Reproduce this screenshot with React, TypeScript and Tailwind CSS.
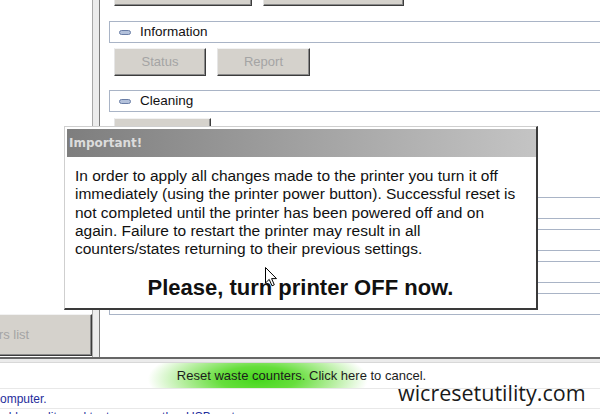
const ui = { fontFamily: '"Liberation Sans", Arial, sans-serif' }

function WinButton({ label, className = '' }: { label?: string; className?: string }) {
  return (
    <div
      className={`flex shrink-0 items-center justify-center border border-t-[#f2f2f2] border-l-[#e6e6e6] border-r-[#3c3c3c] border-b-[#3c3c3c] bg-[#d5d2cc] text-[13px] text-[#a4a4a4] shadow-[inset_-1px_-1px_0_#8a8a8a] ${className}`}
    >
      {label}
    </div>
  )
}

function SectionHeader({ title }: { title?: string }) {
  return (
    <div className="ml-[9px] flex h-[22px] w-[500px] shrink-0 items-center border border-[#a9b4c6] bg-white">
      {title && (
        <>
          <span className="ml-[9px] h-[5px] w-[12px] rounded-full border border-[#6a7ea6] bg-[#b3c1db]" />
          <span className="ml-[9px] text-[13.5px] text-[#111]">{title}</span>
        </>
      )}
    </div>
  )
}

function Cursor() {
  return (
    <svg width="13" height="20" viewBox="0 0 13 20" className="absolute left-[265px] top-[267px]">
      <path d="M0.5 0.5 L0.5 16 L4.2 12.4 L7 18.8 L9.3 17.8 L6.6 11.6 L11.5 11.6 Z" fill="#fff" stroke="#000" strokeWidth="1" />
    </svg>
  )
}

export default function App() {
  return (
    <div className="relative h-[414px] w-[600px] overflow-hidden bg-white" style={ui}>
      {/* main window area */}
      <div className="flex h-[357px]">
        {/* left column */}
        <div className="flex w-[93px] shrink-0 flex-col justify-end overflow-hidden border-r border-[#a8a8a8] pb-[1px]">
          <WinButton label="Printers list" className="ml-[-98px] h-[42px] w-[190px]" />
        </div>
        <div className="w-[6px] shrink-0 bg-[#ececec]" />
        {/* right panel */}
        <div className="flex flex-1 flex-col overflow-hidden border-l border-[#7c7c7c] bg-white">
          <div className="mt-[-21px] flex h-[27px] shrink-0 gap-[11px] pl-[14px]">
            <WinButton className="h-[27px] w-[138px]" />
            <WinButton className="h-[27px] w-[141px]" />
          </div>
          <div className="mt-[15px]">
            <SectionHeader title="Information" />
          </div>
          <div className="mt-[5px] flex gap-[11px] pl-[14px]">
            <WinButton label="Status" className="h-[28px] w-[92px]" />
            <WinButton label="Report" className="h-[28px] w-[93px]" />
          </div>
          <div className="mt-[14px]">
            <SectionHeader title="Cleaning" />
          </div>
          <div className="mt-[6px] flex flex-col gap-[5px] pl-[14px]">
            <WinButton className="h-[28px] w-[97px]" />
            <WinButton className="h-[28px] w-[97px]" />
          </div>
          <div className="mt-[18px] flex flex-col gap-[10px]">
            <SectionHeader />
            <SectionHeader />
            <SectionHeader />
            <SectionHeader />
          </div>
        </div>
      </div>

      {/* window bottom edge */}
      <div className="h-[2px] bg-[#666]" />
      <div className="h-[4px] border-b border-[#d8d8d8] bg-[#ebebeb]" />

      {/* status bar */}
      <div className="flex h-[25px] items-center justify-center bg-[radial-gradient(ellipse_110px_36px_at_258px_65%,#45d81c_0%,#66de3c_35%,#b8efa2_70%,#ffffff_100%)] text-[13px] text-[#1c1c1c]">
        <span className="pl-[3px]">Reset waste counters. Click here to cancel.</span>
      </div>

      {/* message log */}
      <div className="flex h-[20px] items-center overflow-hidden border-t border-[#e8e8e8] text-[12px] text-[#1f2d9c]">
        <span className="ml-[-6px] whitespace-nowrap">computer.</span>
      </div>
      <div className="overflow-hidden border-t border-[#e8e8e8] pt-[1px] text-[12px] leading-[14px] text-[#1f2d9c]">
        <span className="ml-[-4px] whitespace-nowrap">cable quality and try to use another USB port.</span>
      </div>

      {/* dialog */}
      <div className="absolute left-[64px] top-[126px] flex h-[184px] w-[474px] flex-col border-t border-l border-[#cfcfcf] border-r-2 border-b-2 border-r-[#3a3a3a] border-b-[#3a3a3a] bg-white pl-[2px] pt-[2px]">
        <div className="flex h-[28px] shrink-0 items-center bg-[linear-gradient(to_right,#7e7e7e,#c4c4c4)] pl-[2px]">
          <span className="text-[12px] font-bold text-[#dcdcdc]" style={{ fontFamily: '"DejaVu Sans", Verdana, sans-serif' }}>
            Important!
          </span>
        </div>
        <div className="pl-[8px] pt-[10px] text-[15.5px] leading-[18.25px] text-[#111]">
          In order to apply all changes made to the printer you turn it off
          <br />
          immediately (using the printer power button). Successful reset is
          <br />
          not completed until the printer has been powered off and on
          <br />
          again. Failure to restart the printer may result in all
          <br />
          counters/states returning to their previous settings.
        </div>
        <div className="mt-[17px] pr-[2px] text-center text-[22px] font-bold leading-[26px] text-[#111]">
          Please, turn printer OFF now.
        </div>
      </div>

      <Cursor />

      {/* watermark */}
      <div
        className="absolute left-[398px] top-[382px] text-[21.5px] leading-none text-[#1a1a1a]"
        style={{ fontFamily: '"Open Sans", sans-serif' }}
      >
        wicresetutility.com
      </div>
    </div>
  )
}
